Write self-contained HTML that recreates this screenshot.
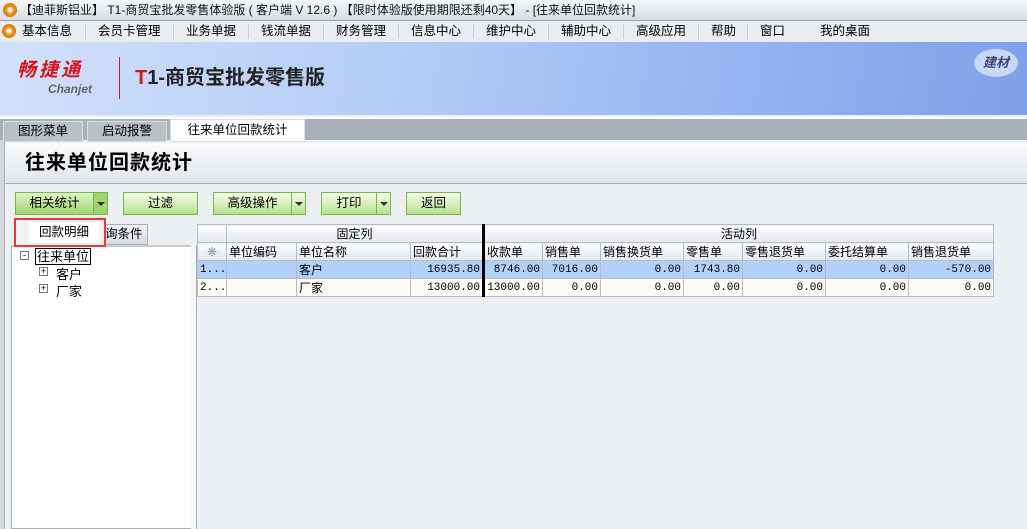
<!DOCTYPE html>
<html><head><meta charset="utf-8"><style>
*{margin:0;padding:0;box-sizing:border-box}
body{width:1027px;height:529px;overflow:hidden;font-family:"Liberation Sans","Noto Sans CJK SC",sans-serif;font-size:12px;background:#edf0f3;position:relative;color:#000}
.a{position:absolute}
.title{left:0;top:0;width:1027px;height:21px;background:linear-gradient(#f4f7f8,#d6dde1);border-bottom:1px solid #9aa6ae;font-size:12px;line-height:20px;padding-left:20px;color:#111}
.ic{width:14px;height:14px;border-radius:50%;background:radial-gradient(circle,#fff 0 2px,#f0a020 3px,#e07010 7px)}
.menu{left:0;top:21px;width:1027px;height:21px;background:#e9ecf1;font-size:12.5px;line-height:21px}
.menu span{position:absolute;top:0}
.sep{position:absolute;top:3px;width:1px;height:15px;background:#c9ced6}
.banner{left:0;top:42px;width:1027px;height:73px;background:linear-gradient(100deg,#d2e1fb 0%,#b3cbf6 40%,#98b5f2 70%,#7e9fe9 100%)}
.tabs{left:0;top:117px;width:1027px;height:23px;background:#a8b1b7;border-top:2px solid #fff}
.tab{position:absolute;top:2px;height:21px;background:#b9c1c6;border:1px solid #d9dee1;text-align:center;line-height:19px;font-size:12.5px}
.btn{position:absolute;top:192px;height:23px;border:1px solid #77b84a;background:linear-gradient(#f4fbe9,#d0ecb1 60%,#b9e090);text-align:center;line-height:21px;font-size:12.5px}
.dd{position:absolute;top:0;right:0;width:14px;height:21px;border-left:1px solid #77b84a}
.dd:after{content:"";position:absolute;left:3px;top:9px;border:4px solid transparent;border-top:4px solid #333;border-bottom:0}
table{border-collapse:collapse;position:absolute;left:197px;top:224px;font-size:11px;table-layout:fixed;width:796px}
td{border:1px solid #b4bcc4;height:17.5px;padding:0 2px;white-space:nowrap;overflow:hidden;font-family:"Liberation Mono","Noto Sans CJK SC",monospace}
.h td{background:linear-gradient(#fafbfc,#e4e8ec);font-family:"Liberation Sans","Noto Sans CJK SC",sans-serif;font-size:12px}
.r{text-align:right}
.r1 td{background:#b3d0f8}.r2 td{background:#fbfaf3}
.k{font-family:"Liberation Sans","Noto Sans CJK SC",sans-serif !important;font-size:12px}
</style></head><body>
<div class="a title">【迪菲斯铝业】 T1-商贸宝批发零售体验版 ( 客户端 V 12.6 ) 【限时体验版使用期限还剩40天】 - [往来单位回款统计]</div>
<div class="a ic" style="left:3px;top:3px"></div>
<div class="a menu">
<div class="a ic" style="left:2px;top:3px"></div>
<span style="left:22px">基本信息</span><i class="sep" style="left:85px"></i>
<span style="left:98px">会员卡管理</span><i class="sep" style="left:173px"></i>
<span style="left:186px">业务单据</span><i class="sep" style="left:248px"></i>
<span style="left:261px">钱流单据</span><i class="sep" style="left:323px"></i>
<span style="left:336px">财务管理</span><i class="sep" style="left:398px"></i>
<span style="left:411px">信息中心</span><i class="sep" style="left:473px"></i>
<span style="left:486px">维护中心</span><i class="sep" style="left:548px"></i>
<span style="left:561px">辅助中心</span><i class="sep" style="left:623px"></i>
<span style="left:636px">高级应用</span><i class="sep" style="left:698px"></i>
<span style="left:711px">帮助</span><i class="sep" style="left:747px"></i>
<span style="left:760px">窗口</span>
<span style="left:820px">我的桌面</span>
</div>
<div class="a banner">
<div class="a" style="left:17px;top:18px;color:#d8141b;font-size:19px;font-weight:bold;font-style:italic;letter-spacing:3px;line-height:22px">畅捷通</div>
<div class="a" style="left:48px;top:40px;color:#666;font-size:12px;font-weight:bold;font-style:italic;line-height:14px">Chanjet</div>
<div class="a" style="left:119px;top:15px;width:1px;height:42px;background:#c0202a"></div>
<div class="a" style="left:135px;top:24px;font-size:20px;font-weight:bold;color:#222;line-height:24px"><span style="color:#d8141b">T</span>1-商贸宝批发零售版</div>
<div class="a" style="left:974px;top:7px;width:44px;height:28px;border-radius:50%;background:#c8d8f2;color:#3a4a70;font-size:13px;font-weight:bold;font-style:italic;text-align:center;line-height:28px">建材</div>
</div>
<div class="a tabs">
<div class="tab" style="left:3px;width:80px">图形菜单</div>
<div class="tab" style="left:87px;width:80px">启动报警</div>
<div class="tab" style="left:170px;width:135px;background:#fff;top:0;height:23px;line-height:21px">往来单位回款统计</div>
</div>
<div class="a" style="left:0;top:140px;width:5px;height:389px;background:#d4d8dc;border-right:1px solid #a9b1b7"></div>
<div class="a" style="left:5px;top:143px;width:1022px;height:41px;background:linear-gradient(#fafbfc,#e1e6ea);border-bottom:1px solid #a7b0b8;font-size:20px;font-weight:bold;line-height:41px;padding-left:20px;letter-spacing:1px">往来单位回款统计</div>
<div class="btn" style="left:15px;width:93px;padding-right:14px;background:linear-gradient(#dff2c8,#9fd46e)">相关统计<i class="dd" style="background:#9fd46e"></i></div>
<div class="btn" style="left:123px;width:75px">过滤</div>
<div class="btn" style="left:213px;width:93px;padding-right:14px">高级操作<i class="dd"></i></div>
<div class="btn" style="left:321px;width:70px;padding-right:14px">打印<i class="dd"></i></div>
<div class="btn" style="left:406px;width:55px">返回</div>
<div class="a" style="left:100px;top:224px;width:48px;height:21px;background:linear-gradient(#f0f2f4,#d5dadf);border:1px solid #a7b0b8;line-height:19px;padding-left:4px;font-size:12.5px">询条件</div>
<div class="a" style="left:11px;top:245px;width:181px;height:284px;background:#fff;border:1px solid #a7b0b8;border-top:2px solid #c5ccd2"></div>
<div class="a" style="left:191px;top:245px;width:6px;height:284px;background:#f5f6f8;border-right:1px solid #a7b0b8"></div>
<div class="a" style="left:20px;top:251px;width:9px;height:9px;border:1px solid #777;font-size:9px;line-height:6px;text-align:center">-</div>
<div class="a" style="left:35px;top:248px;border:1px solid #000;padding:0 1px;font-size:13px;line-height:15px">往来单位</div>
<div class="a" style="left:39px;top:267px;width:9px;height:9px;border:1px solid #777;font-size:9px;line-height:7px;text-align:center">+</div>
<div class="a" style="left:56px;top:264px;font-size:13px">客户</div>
<div class="a" style="left:39px;top:284px;width:9px;height:9px;border:1px solid #777;font-size:9px;line-height:7px;text-align:center">+</div>
<div class="a" style="left:56px;top:281px;font-size:13px">厂家</div>
<div class="a" style="left:14px;top:218px;width:92px;height:29px;border:2px solid #e63a3a;background:#f2f2f2"><div style="position:absolute;left:13px;top:2px;width:70px;height:20px;background:#fff;line-height:20px;text-align:center;font-size:12.5px">回款明细</div></div>
<table>
<colgroup><col style="width:29px"><col style="width:70px"><col style="width:114px"><col style="width:73px"><col style="width:59px"><col style="width:58px"><col style="width:83px"><col style="width:59px"><col style="width:83px"><col style="width:83px"><col style="width:85px"></colgroup>
<tr class="h"><td></td><td colspan="3" style="text-align:center;border-right:3px solid #000">固定列</td><td colspan="7" style="text-align:center">活动列</td></tr>
<tr class="h"><td style="text-align:center;color:#999">❋</td><td>单位编码</td><td>单位名称</td><td style="border-right:3px solid #000">回款合计</td><td>收款单</td><td>销售单</td><td>销售换货单</td><td>零售单</td><td>零售退货单</td><td>委托结算单</td><td>销售退货单</td></tr>
<tr class="r1"><td>1...</td><td></td><td class="k">客户</td><td class="r" style="border-right:3px solid #000">16935.80</td><td class="r">8746.00</td><td class="r">7016.00</td><td class="r">0.00</td><td class="r">1743.80</td><td class="r">0.00</td><td class="r">0.00</td><td class="r">-570.00</td></tr>
<tr class="r2"><td>2...</td><td></td><td class="k">厂家</td><td class="r" style="border-right:3px solid #000">13000.00</td><td class="r">13000.00</td><td class="r">0.00</td><td class="r">0.00</td><td class="r">0.00</td><td class="r">0.00</td><td class="r">0.00</td><td class="r">0.00</td></tr>
</table>
</body></html>
